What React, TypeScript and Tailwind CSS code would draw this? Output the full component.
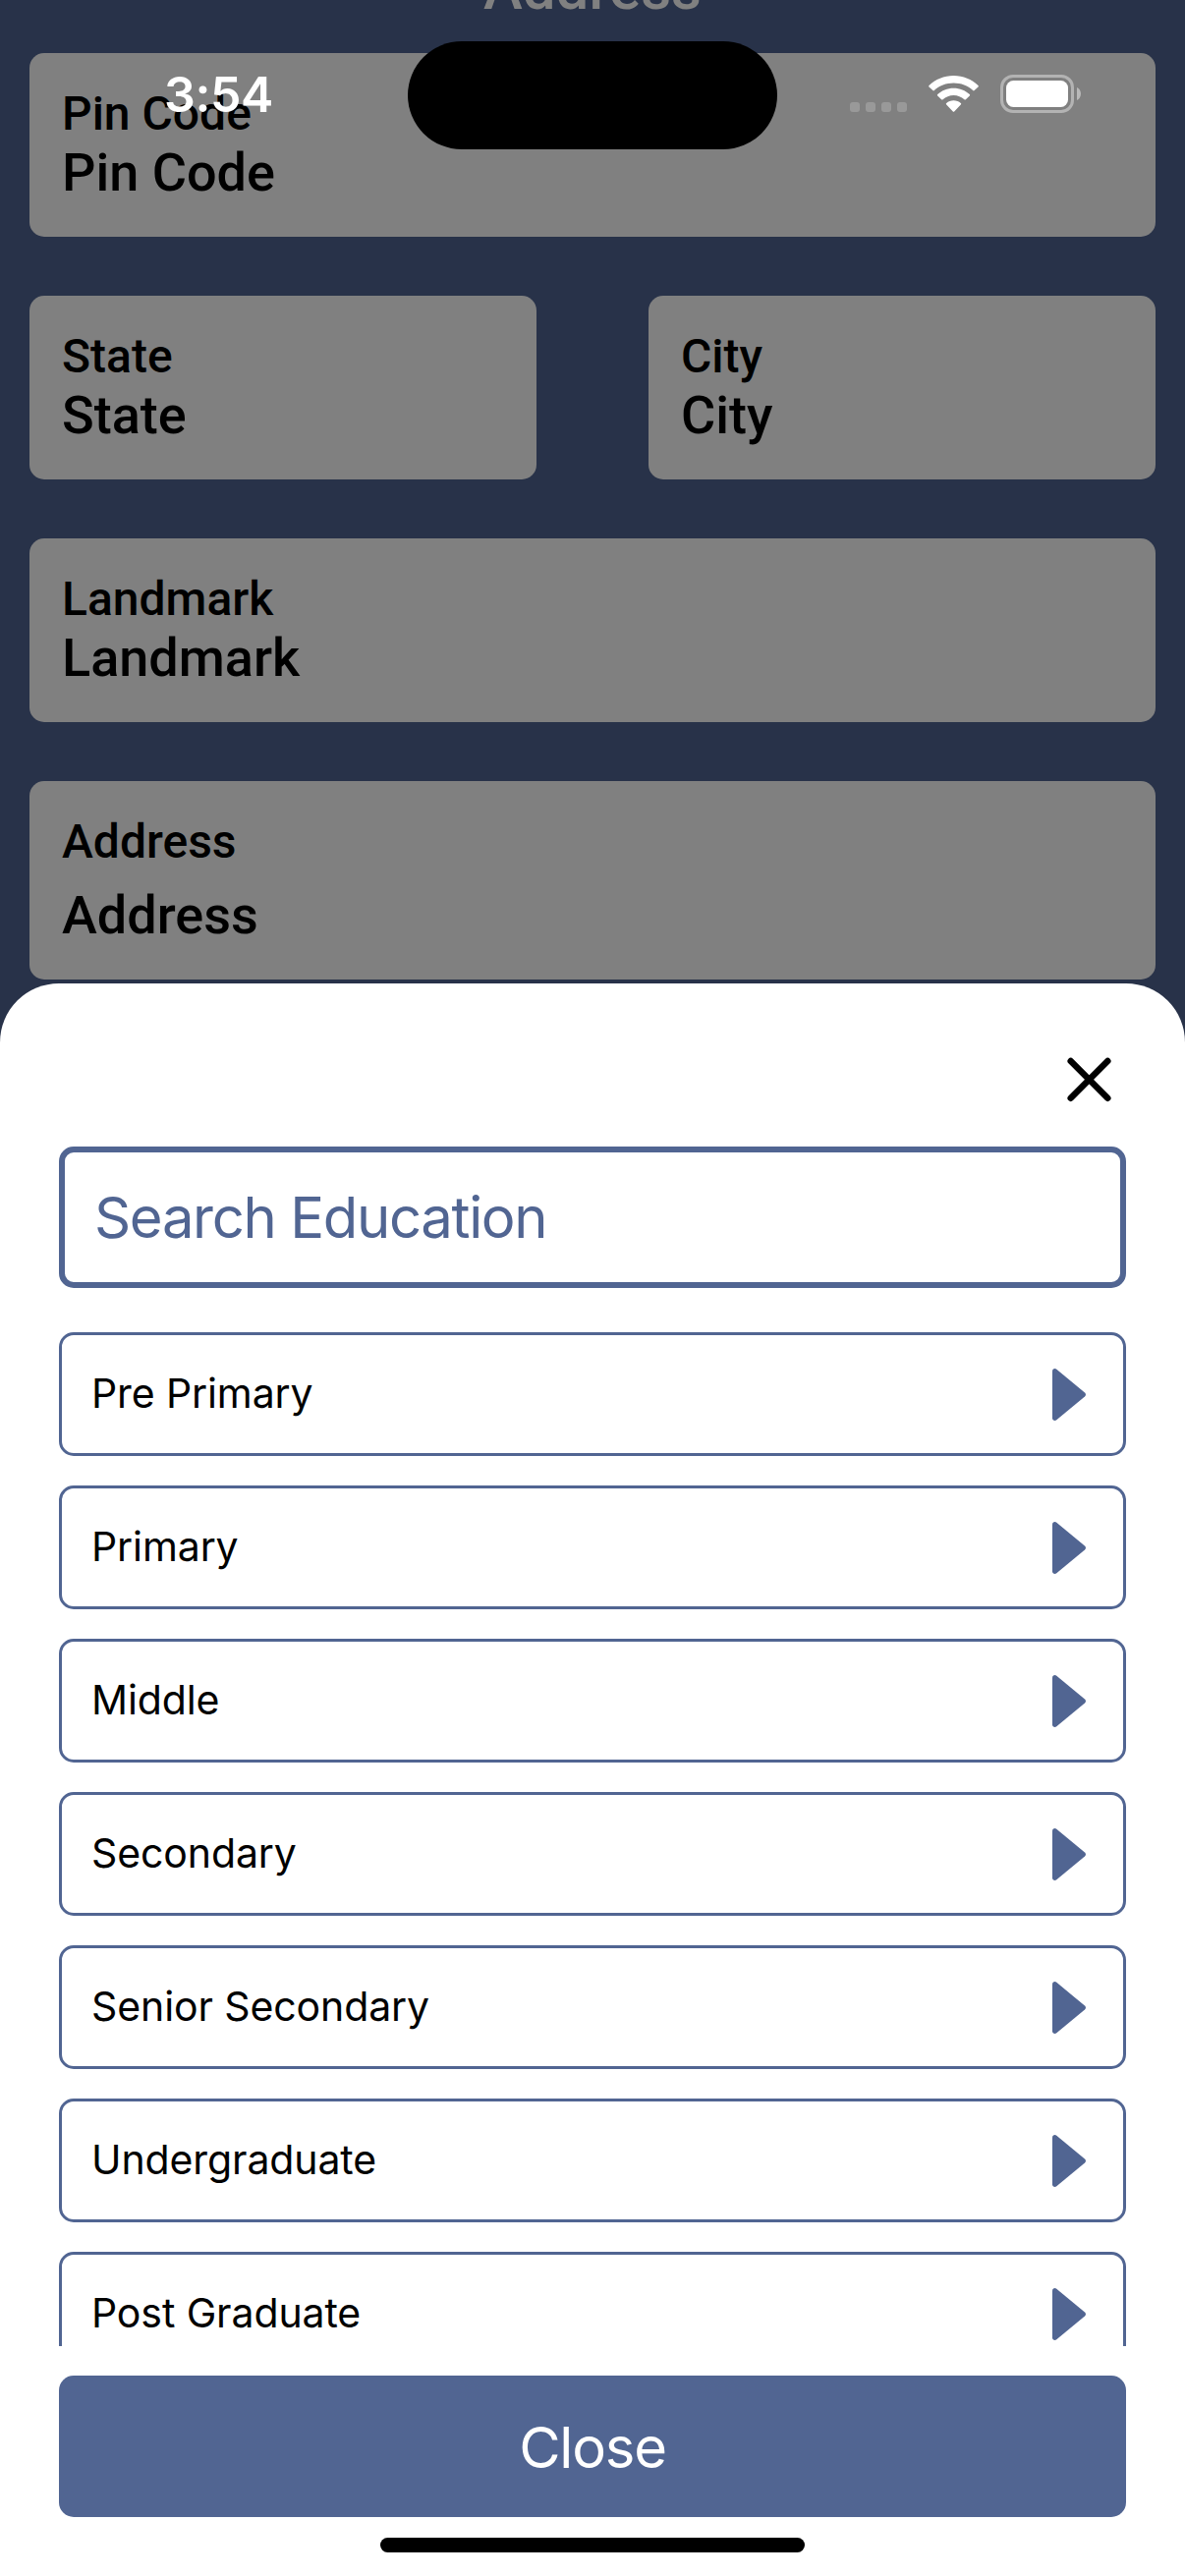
const levels = [
  "Pre Primary",
  "Primary",
  "Middle",
  "Secondary",
  "Senior Secondary",
  "Undergraduate",
  "Post Graduate",
];

function Field({ label, tall = false }: { label: string; tall?: boolean }) {
  return (
    <div
      className={`flex-1 rounded-[15px] bg-[#808080] px-[33px] pt-[33px] font-medium text-black ${
        tall ? "h-[202px]" : "h-[187px]"
      }`}
    >
      <div className="text-[48px] leading-[58px]">{label}</div>
      <div className={`text-[54px] leading-[64px] ${tall ? "mt-[14px]" : "-mt-px"}`}>{label}</div>
    </div>
  );
}

function StatusBar() {
  return (
    <div className="absolute inset-x-0 top-0 h-[177px] font-[Inter,sans-serif] text-white">
      <div className="absolute left-[167px] top-[66px] text-[50px] font-semibold leading-[60px] tracking-[-0.4px]">
        3:54
      </div>
      <div className="absolute left-[415px] top-[42px] h-[110px] w-[376px] rounded-[55px] bg-black" />
      <div className="absolute left-[865px] top-[104px] flex gap-[6px]">
        {[0, 1, 2, 3].map((i) => (
          <span key={i} className="size-[10px] rounded-[3px] bg-[#999999]" />
        ))}
      </div>
      <svg className="absolute left-[945px] top-[77px]" width="51" height="37" viewBox="0 0 51 37" fill="#fff">
        <path d="M25.5 0C35.2 0 44 3.8 50.5 10c.5.5.5 1.1 0 1.600L46.600 15.100c-.4.4-1 .4-1.400 0C40 10.300 33.100 7.600 25.500 7.600S11 10.300 5.800 15.100c-.4.4-1 .4-1.400 0L.5 11.600c-.5-.5-.5-1.100 0-1.600C7 3.800 15.800 0 25.500 0Z" />
        <path d="M25.500 12.700c6.300 0 12 2.400 16.300 6.300.5.5.5 1.100 0 1.600l-3.900 3.700c-.4.400-1 .4-1.500 0-2.900-2.600-6.700-4.200-10.900-4.200s-8 1.600-10.900 4.200c-.5.400-1.100.400-1.500 0l-3.900-3.700c-.5-.5-.5-1.100 0-1.600 4.300-3.900 10-6.300 16.300-6.300Z" />
        <path d="M25.500 25.300c2.800 0 5.400 1 7.300 2.700.5.400.5 1 0 1.500l-6.600 7c-.4.400-1 .4-1.400 0l-6.600-7c-.5-.5-.5-1.100 0-1.500 1.900-1.700 4.500-2.700 7.300-2.700Z" />
      </svg>
      <svg className="absolute left-[1018px] top-[76px]" width="83" height="39" viewBox="0 0 83 39">
        <rect x="1.500" y="1.500" width="72" height="36" rx="11.500" fill="none" stroke="#b3b3b3" strokeWidth="3" />
        <rect x="6" y="6" width="63" height="27" rx="7.500" fill="#fff" />
        <path d="M78 13c2.400 1 4 3.600 4 6.500S80.400 25 78 26Z" fill="#b9b9b9" />
      </svg>
    </div>
  );
}

export default function App() {
  return (
    <div className="relative h-[2622px] w-[1206px] overflow-hidden bg-[#283249] font-[Roboto,sans-serif]">
      <div className="flex flex-col px-[30px]">
        <h1 className="-mt-[47px] h-[101px] text-center text-[60px] font-medium leading-[72px] text-[#808080]">
          Address
        </h1>
        <div className="flex flex-col gap-[60px]">
          <div className="flex">
            <Field label="Pin Code" />
          </div>
          <div className="flex gap-[114px]">
            <Field label="State" />
            <Field label="City" />
          </div>
          <div className="flex">
            <Field label="Landmark" />
          </div>
          <div className="flex">
            <Field label="Address" tall />
          </div>
        </div>
      </div>

      <StatusBar />

      <div className="absolute inset-x-0 bottom-0 flex h-[1621px] flex-col rounded-t-[60px] bg-white px-[60px] font-[Inter,sans-serif]">
        <button className="mt-[62px] flex size-[72px] self-end" aria-label="Close sheet">
          <svg width="72" height="72" viewBox="0 0 72 72" fill="none" stroke="#000" strokeWidth="6.500" strokeLinecap="round">
            <path d="M15.700 17 53.300 54.700M53.300 17 15.700 54.700" />
          </svg>
        </button>
        <div className="mt-[32px] flex h-[144px] shrink-0 items-center rounded-[15px] border-[6px] border-[#516592] px-[30px] text-[58px] tracking-[-1.35px] text-[#516592]">
          Search Education
        </div>
        <div className="mt-[45px] flex h-[1032px] shrink-0 flex-col gap-[30px] overflow-hidden">
          {levels.map((level) => (
            <div
              key={level}
              className="flex h-[126px] shrink-0 items-center justify-between rounded-[15px] border-[3px] border-[#516592] pl-[30px] pr-[38px] text-[41px] tracking-[-0.1px] text-black"
            >
              <span>{level}</span>
              <svg width="34" height="53" viewBox="0 0 34 53" fill="#516592">
                <path d="M0 2.500C0 .4 2.500-.7 4.300.7L33 24.600c1.300 1.100 1.300 2.700 0 3.800L4.300 52.300C2.500 53.700 0 52.600 0 50.500Z" />
              </svg>
            </div>
          ))}
        </div>
        <button className="mt-[30px] h-[144px] shrink-0 rounded-[15px] bg-[#516592] pt-[2px] text-[58px] tracking-[-1.200px] text-white">
          Close
        </button>
        <div className="mt-[21px] h-[15px] w-[432px] shrink-0 self-center rounded-full bg-black" />
      </div>
    </div>
  );
}
